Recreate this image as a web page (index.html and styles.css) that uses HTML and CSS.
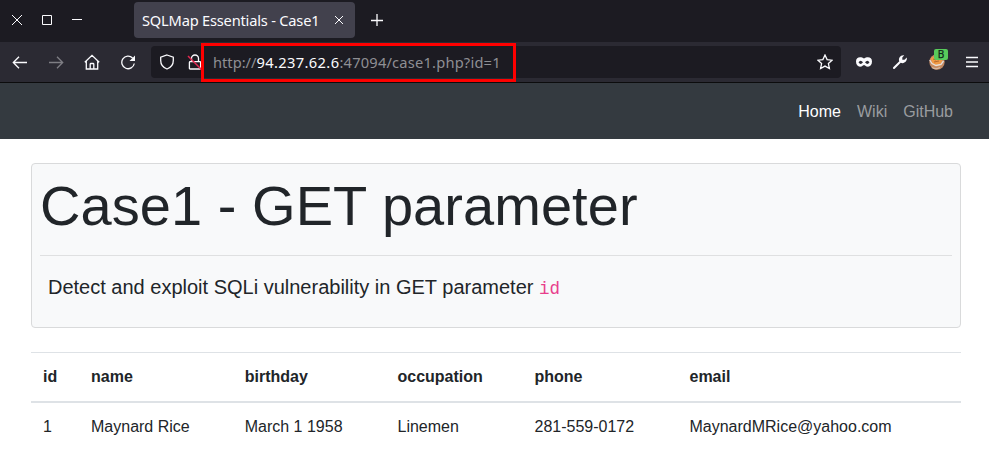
FILE: index.html
```html
<!DOCTYPE html>
<html lang="en">
<head>
<meta charset="utf-8">
<title>SQLMap Essentials - Case1</title>
<link rel="stylesheet" href="styles.css">
</head>
<body>
<header class="browser">
  <div class="tabstrip">
    <div class="window-controls">
      <svg width="10" height="10" viewBox="0 0 10 10"><path d="M0 0L10 10M10 0L0 10"/></svg>
      <svg width="10" height="10" viewBox="0 0 10 10"><path d="M.5.5h9v9h-9z"/></svg>
      <svg width="10" height="10" viewBox="0 0 10 10"><path d="M0 4.500h10"/></svg>
    </div>
    <div class="tab">
      <span class="tab-title">SQLMap Essentials - Case1</span>
      <svg width="8" height="8" viewBox="0 0 8 8"><path d="M0 0l8 8M8 0L0 8"/></svg>
    </div>
    <svg class="new-tab" width="12" height="12" viewBox="0 0 12 12"><path d="M6 0v12M0 6.500h12"/></svg>
  </div>
  <div class="toolbar">
    <div class="nav-buttons">
      <svg width="16" height="16" viewBox="0 0 16 16"><path d="M15 8.500H1.500M7 2.800L1.300 8.500L7 14.200"/></svg>
      <svg class="disabled" width="16" height="16" viewBox="0 0 16 16"><path d="M1 8.500h13.500M9 2.800L14.700 8.500L9 14.200"/></svg>
      <svg class="home" width="16" height="16" viewBox="0 0 16 16"><path d="M.8 8.300L8 1.300l7.200 7M2.300 7v8h11.400V7M6.200 15v-4.700q0-.8.800-.8h2q.8 0 .8.800V15"/></svg>
      <svg width="16" height="16" viewBox="0 0 16 16"><path d="M12.600 4A6.300 6.300 0 1 0 14.300 9.500"/><path class="solid" d="M15 1.500v5.500H9.500z"/></svg>
    </div>
    <div class="urlbar">
      <svg class="shield" width="16" height="16" viewBox="0 0 16 16"><path d="M8 1L14.300 3.200V6.500C14.300 10.500 12 13.500 8 15C4 13.500 1.700 10.500 1.700 6.500V3.200Z"/></svg>
      <svg class="lock" width="16" height="16" viewBox="0 0 16 16"><path d="M4.500 7V4.500a3.500 3.500 0 0 1 7 0V7M3.200 7.700h9.600q.8 0 .8.800v5.700q0 .8-.8.800H3.200q-.8 0-.8-.8V8.500q0-.8.800-.8z"/><path class="slash" d="M1 2L14.500 15.500"/></svg>
      <div class="url"><span>http://</span><span class="host">94.237.62.6</span><span class="path">:47094/case1.php?id=1</span></div>
      <svg class="star" width="16" height="16" viewBox="0 0 16 16"><path d="M8 1l2.100 4.600 5 .6-3.700 3.400 1 5L8 12.100l-4.400 2.500 1-5L.9 6.200l5-.6z"/></svg>
    </div>
    <div class="extensions">
      <svg width="16" height="16" viewBox="0 0 16 16"><path class="solid" fill-rule="evenodd" d="M0 7.500C0 2.500 5 2.500 8 4.500C11 2.500 16 2.500 16 7.500C16 12.500 12 14 9 11.500Q8 10.500 7 11.500C4 14 0 12.500 0 7.500ZM2.500 8.300Q4.500 11.500 7 8.300Q4.500 5.200 2.500 8.300ZM9 8.300Q11.500 11.500 13.500 8.300Q11.500 5.200 9 8.300Z"/></svg>
      <svg width="16" height="16" viewBox="0 0 16 16"><path class="solid" d="M1.200 13.300L7.300 7.300C6 4.200 8.500.7 12.200 1.300L10.300 3.500v2.200h2.200L14.800 3.600C15.500 7.300 12 10.300 8.700 8.700L2.700 14.800q-.8.600-1.400 0t-.1-1.500z"/></svg>
      <div class="profile">
        <svg width="18" height="18" viewBox="0 0 18 18"><circle cx="9" cy="9" r="7.700" fill="#c48a62" stroke="none"/><path d="M3 5Q9 1 15 5l-2 7q-5 3-9-1z" fill="#f19a45" stroke="none"/><path d="M5 6l3 1M6 9l5-1" stroke="#b56c30" stroke-width="1"/><path d="M1.700 7l2.300 3.500 4 2 5-1 2.500-3.500" stroke="#e4e0df"/><path d="M4 14.500q4 2.500 8 0" stroke="#d9b89d"/></svg>
        <span class="badge">B</span>
      </div>
      <svg class="menu" width="12" height="12" viewBox="0 0 12 12"><path d="M0 1.500h12M0 6h12M0 10.500h12"/></svg>
    </div>
  </div>
  <div class="highlight"></div>
</header>
<nav class="navbar"><a class="active">Home</a><a>Wiki</a><a>GitHub</a></nav>
<main>
  <section class="card">
    <h1>Case1 - GET parameter</h1>
    <hr>
    <p>Detect and exploit SQLi vulnerability in GET parameter <code>id</code></p>
  </section>
  <table>
    <colgroup><col class="c-id"><col class="c-name"><col class="c-birthday"><col class="c-occupation"><col class="c-phone"><col></colgroup>
    <thead><tr><th>id</th><th>name</th><th>birthday</th><th>occupation</th><th>phone</th><th>email</th></tr></thead>
    <tbody><tr><td>1</td><td>Maynard Rice</td><td>March 1 1958</td><td>Linemen</td><td>281-559-0172</td><td>MaynardMRice@yahoo.com</td></tr></tbody>
  </table>
</main>
</body>
</html>
```
FILE: styles.css
```css
* { box-sizing: border-box; }
body { margin: 0; height: 461px; overflow: hidden; background: #fff; color: #212529; font: 16px/24px "Liberation Sans", Arial, sans-serif; }
svg { display: block; flex: none; fill: none; stroke: #fbfbfe; stroke-width: 1.3; }
svg .solid { fill: #fbfbfe; stroke: none; }
.browser { position: relative; height: 83px; background: #2b2a33; border-bottom: 1px solid #0c0c0d; font-family: "Noto Sans", sans-serif; color: #fbfbfe; }
.tabstrip { display: flex; align-items: center; height: 42px; padding: 0 12px; background: #1c1b22; }
.window-controls { display: flex; gap: 20px; width: 122px; margin-top: -2px; }
.window-controls svg { stroke-width: 1; }
.tab { display: flex; align-items: center; justify-content: space-between; width: 221px; height: 36px; margin-top: -2px; padding: 0 12px 0 8px; border-radius: 4px; background: #42414d; }
.tab-title { font-size: 14.670px; letter-spacing: -.21px; white-space: nowrap; }
.tab svg { stroke-width: 1; }
.new-tab { margin: -2px 0 0 15.500px; }
.toolbar { display: flex; align-items: center; height: 40px; }
.nav-buttons { display: flex; gap: 20px; width: 151px; padding-left: 12px; }
.home { margin-left: -.5px; margin-right: .5px; }
.disabled { opacity: .4; }
.urlbar { display: flex; align-items: center; width: 690px; height: 32px; padding: 0 8px; border-radius: 4px; background: #1c1b22; }
.lock { margin-left: 12px; }
.lock .slash { stroke: #e22850; stroke-width: 1.500; }
.url { flex: 1; margin-left: 10px; font-size: 14.670px; white-space: nowrap; color: #8f8f94; }
.host { color: #fbfbfe; letter-spacing: .37px; }
.path { letter-spacing: .2px; }
.extensions { display: flex; align-items: center; gap: 20px; padding-left: 15px; }
.profile { position: relative; width: 18px; margin-right: -1px; }
.badge { position: absolute; left: 6px; top: -4px; width: 14px; height: 11px; border-radius: 2px; background: #58cb5b; color: #10251a; font-size: 10px; line-height: 11px; text-align: center; -webkit-text-stroke: .25px #10251a; }
.menu { margin-left: 1px; }
.highlight { position: absolute; left: 201px; top: 43px; width: 315px; height: 39px; border: 3px solid #f00; }
.navbar { display: flex; justify-content: flex-end; align-items: center; gap: 16px; height: 56px; padding: 2px 36px 0 0; background: #343a40; color: #999c9f; }
.navbar .active { color: #fff; }
main { padding: 24px 28px 0 31px; }
.card { height: 165px; padding: 8px; border: 1px solid #d9dadb; border-radius: 4px; background: #f8f9fa; }
h1 { margin: 0; font-size: 56px; font-weight: 300; line-height: 67px; letter-spacing: .05px; }
hr { height: 1px; margin: 16px 0; border: 0; background: #dfe0e1; }
p { margin: 0 8px; font-size: 20px; line-height: 30px; }
code { font: 17.500px "Liberation Mono", monospace; color: #e83e8c; }
table { width: 930px; margin-top: 24px; border-collapse: collapse; table-layout: fixed; }
th, td { padding: 12px; border-top: 1px solid #dee2e6; text-align: left; }
thead th { border-bottom: 2px solid #dee2e6; }
.c-id { width: 48px; }
.c-name { width: 153.700px; }
.c-birthday { width: 152.800px; }
.c-occupation { width: 137px; }
.c-phone { width: 155px; }
```
